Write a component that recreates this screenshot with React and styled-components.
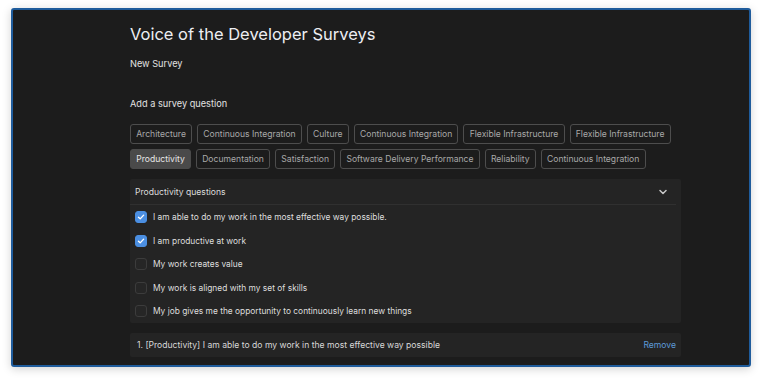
import React, { useState } from "react";
import styled, { createGlobalStyle } from "styled-components";

const GlobalStyle = createGlobalStyle`
  html, body {
    margin: 0;
    padding: 0;
    background: #ffffff;
    font-family: Inter, "Noto Sans", sans-serif;
  }
  * { box-sizing: border-box; }
`;

const Page = styled.div`
  width: 763px;
  height: 383px;
  padding: 8px 12px 16px 11px;
`;

const Window = styled.div`
  width: 740px;
  height: 359px;
  background: #1c1c1c;
  border: 2px solid #1f5c9c;
  border-radius: 3px;
  box-shadow: 0 2px 10px rgba(0, 0, 0, 0.18);
  padding: 12px 0 0 117px;
  overflow: hidden;
`;

const Content = styled.div`
  width: 551px;
  display: flex;
  flex-direction: column;
`;

const Title = styled.h1`
  margin: 0;
  font-size: 16.5px;
  line-height: 24px;
  font-weight: 400;
  color: #eceef2;
`;

const Label = styled.div`
  font-size: 9.2px;
  line-height: 14px;
  color: #e2e2e2;
  margin-top: ${(p) => p.$top}px;
`;

const Tags = styled.div`
  display: flex;
  flex-wrap: wrap;
  gap: 5px 5px;
  margin-top: 13px;
`;

const Tag = styled.button`
  height: 20px;
  padding: 0 5.2px;
  font-family: inherit;
  font-size: 8.6px;
  color: ${(p) => (p.$active ? "#e6e6e6" : "#a9a9a9")};
  background: ${(p) => (p.$active ? "#4a4a4a" : "transparent")};
  border: 1px solid ${(p) => (p.$active ? "#4a4a4a" : "#4d4d4d")};
  border-radius: 3px;
  cursor: pointer;
`;

const Panel = styled.div`
  margin-top: 10px;
  background: #242424;
  border-radius: 2px;
`;

const PanelHeader = styled.div`
  height: 26px;
  padding: 1px 9px 0 5px;
  display: flex;
  align-items: center;
  justify-content: space-between;
  font-size: 8.6px;
  color: #dcdcdc;
  border-bottom: 1px solid #303030;
  margin: 0 5px 0 0;
`;

const Item = styled.label`
  height: 23.5px;
  padding: 1px 0 0 5px;
  display: flex;
  align-items: center;
  gap: 6px;
  font-size: 8.4px;
  color: #dedede;
  cursor: pointer;
`;

const Box = styled.span`
  width: 12px;
  height: 12px;
  flex: none;
  border-radius: 3px;
  display: flex;
  align-items: center;
  justify-content: center;
  background: ${(p) => (p.$checked ? "#4b8fe2" : "#262626")};
  border: 1px solid ${(p) => (p.$checked ? "#4b8fe2" : "#3c3c3c")};
`;

const Selected = styled.div`
  margin-top: 10px;
  height: 24px;
  background: #242424;
  border-radius: 2px;
  display: flex;
  align-items: center;
  justify-content: space-between;
  padding: 0 5px 0 7px;
  font-size: 8.6px;
  color: #d8d8d8;
`;

const RemoveLink = styled.span`
  color: #5d9ad8;
  cursor: pointer;
`;

const tagRows = [
  "Architecture",
  "Continuous Integration",
  "Culture",
  "Continuous Integration",
  "Flexible Infrastructure",
  "Flexible Infrastructure",
  "Productivity",
  "Documentation",
  "Satisfaction",
  "Software Delivery Performance",
  "Reliability",
  "Continuous Integration",
];

const questions = [
  "I am able to do my work in the most effective way possible.",
  "I am productive at work",
  "My work creates value",
  "My work is aligned with my set of skills",
  "My job gives me the opportunity to continuously learn new things",
];

function Check() {
  return (
    <svg width="8" height="8" viewBox="0 0 10 10" fill="none">
      <path d="M1.8 5.2 L4 7.3 L8.3 2.7" stroke="#fff" strokeWidth="1.7" strokeLinecap="round" strokeLinejoin="round" />
    </svg>
  );
}

function Chevron() {
  return (
    <svg width="8" height="6" viewBox="0 0 8 6" fill="none">
      <path d="M1 1.5 L4 4.5 L7 1.5" stroke="#c8c8c8" strokeWidth="1.5" strokeLinecap="round" strokeLinejoin="round" />
    </svg>
  );
}

function App() {
  const [checked, setChecked] = useState([true, true, false, false, false]);
  const toggle = (i) => setChecked(checked.map((c, j) => (j === i ? !c : c)));

  return (
    <Page>
      <GlobalStyle />
      <Window>
        <Content>
          <Title>Voice of the Developer Surveys</Title>
          <Label $top={11}>New Survey</Label>
          <Label $top={26}>Add a survey question</Label>
          <Tags>
            {tagRows.map((t, i) => (
              <Tag key={i} $active={i === 6}>
                {t}
              </Tag>
            ))}
          </Tags>
          <Panel>
            <PanelHeader>
              Productivity questions
              <Chevron />
            </PanelHeader>
            {questions.map((q, i) => (
              <Item key={i} onClick={() => toggle(i)}>
                <Box $checked={checked[i]}>{checked[i] && <Check />}</Box>
                {q}
              </Item>
            ))}
          </Panel>
          <Selected>
            1. [Productivity] I am able to do my work in the most effective way possible
            <RemoveLink>Remove</RemoveLink>
          </Selected>
        </Content>
      </Window>
    </Page>
  );
}

export default App;
